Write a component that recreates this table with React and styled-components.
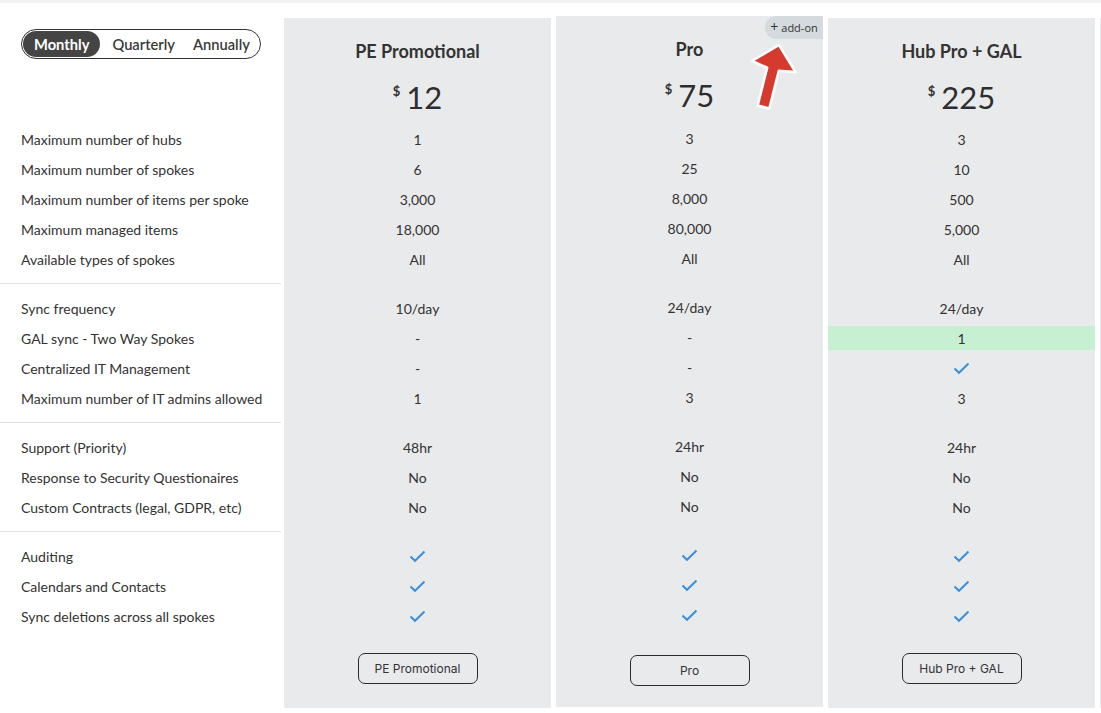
import React from 'react';
import styled, { createGlobalStyle, css } from 'styled-components';

const Global = createGlobalStyle`
  html, body { margin: 0; padding: 0; background: #fff; }
  body { font-family: Lato, "Noto Sans", sans-serif; color: #333; overflow: hidden; }
  #root { width: 1101px; height: 713px; overflow: hidden; }
`;

const TopBand = styled.div`
  height: 3px;
  background: #f3f3f3;
`;

const Table = styled.div`
  display: flex;
  align-items: flex-start;
  gap: 5px;
  margin-top: 15px;
`;

const LabelColumn = styled.div`
  flex: 0 0 279px;
  display: flex;
  flex-direction: column;
`;

const Card = styled.div`
  position: relative;
  flex: 0 0 267px;
  height: ${p => (p.$raised ? 691 : 690)}px;
  margin-top: ${p => (p.$raised ? -2 : 0)}px;
  background: #e9eaec;
  display: flex;
  flex-direction: column;
`;

const Header = styled.div`
  height: ${p => p.$h}px;
  flex: 0 0 auto;
  display: flex;
  flex-direction: column;
  align-items: center;
  padding-top: 22px;
  box-sizing: border-box;
`;

const LabelHeader = styled.div`
  height: 106px;
  padding: 11px 0 0 21px;
  box-sizing: border-box;
`;

const Toggle = styled.div`
  display: inline-flex;
  align-items: center;
  border: 1px solid #333;
  border-radius: 16px;
  padding: 1px;
  height: 30px;
  box-sizing: border-box;
`;

const ToggleOption = styled.span`
  height: 26px;
  display: flex;
  align-items: center;
  padding: 0 ${p => (p.$active ? 11 : 9)}px;
  border-radius: 13px;
  font-size: 14.7px;
  font-weight: ${p => (p.$active ? 700 : 600)};
  color: ${p => (p.$active ? '#fff' : '#3a3a3a')};
  background: ${p => (p.$active ? '#444' : 'transparent')};
  margin-right: ${p => (p.$active ? 3 : 0)}px;
`;

const Title = styled.div`
  font-size: 18px;
  line-height: 22px;
  font-weight: 700;
  color: #333;
`;

const Price = styled.div`
  margin-top: 17px;
  display: flex;
  align-items: flex-start;
  line-height: 36px;
`;

const Currency = styled.span`
  font-size: 13px;
  line-height: 13px;
  font-weight: 700;
  margin-top: 6px;
  margin-right: 6px;
`;

const Amount = styled.span`
  font-size: 31px;
  color: #2e2e2e;
`;

const Section = styled.div`
  padding: ${p => (p.$first ? 0 : 9)}px 0 9px;
`;

const Divider = styled.div`
  height: 1px;
  background: ${p => (p.$visible ? '#e2e2e2' : 'transparent')};
  margin-right: ${p => (p.$visible ? -2 : 0)}px;
`;

const LabelRow = styled.div`
  height: 30px;
  display: flex;
  align-items: center;
  padding-left: 21px;
  font-size: 14px;
  color: #333;
  white-space: nowrap;
`;

const Cell = styled.div`
  height: 30px;
  box-sizing: border-box;
  display: flex;
  align-items: center;
  justify-content: center;
  font-size: 14px;
  color: #333;
  ${p =>
    p.$highlight &&
    css`
      padding: 3px 0;
      background: #c7f0d3;
      background-clip: content-box;
    `}
`;

const Footer = styled.div`
  margin-top: ${p => (p.$raised ? 16 : 13)}px;
  display: flex;
  justify-content: center;
`;

const PlanButton = styled.button`
  width: 120px;
  height: 31px;
  border: 1px solid #2b2b2b;
  border-radius: 7px;
  background: transparent;
  font-family: Inter, "Noto Sans", sans-serif;
  font-size: 12px;
  color: #333;
  padding: 0;
  cursor: pointer;
`;

const Badge = styled.div`
  position: absolute;
  top: 0;
  right: 0;
  width: 58px;
  height: 23px;
  box-sizing: border-box;
  background: #d4dadd;
  border-radius: 12px 0 0 12px;
  display: flex;
  align-items: center;
  justify-content: center;
  gap: 3px;
  font-family: "Open Sans", "Noto Sans", sans-serif;
  font-size: 11px;
  color: #333;
`;

const Plus = styled.span`
  font-size: 14px;
  font-weight: 400;
  line-height: 1;
  margin-top: -1px;
`;

const ArrowSvg = styled.svg`
  position: absolute;
  left: 188px;
  top: 20px;
  width: 60px;
  height: 80px;
  overflow: visible;
  pointer-events: none;
`;

const Check = () => (
  <svg width="17" height="13" viewBox="0 0 17 13">
    <path d="M1.5 6.5 L6 10.8 L15.5 1.5" fill="none" stroke="#3b8fd8" strokeWidth="2" />
  </svg>
);

const C = 'check';

const sections = [
  [
    ['Maximum number of hubs', ['1', '3', '3']],
    ['Maximum number of spokes', ['6', '25', '10']],
    ['Maximum number of items per spoke', ['3,000', '8,000', '500']],
    ['Maximum managed items', ['18,000', '80,000', '5,000']],
    ['Available types of spokes', ['All', 'All', 'All']],
  ],
  [
    ['Sync frequency', ['10/day', '24/day', '24/day']],
    ['GAL sync - Two Way Spokes', ['-', '-', '1'], 2],
    ['Centralized IT Management', ['-', '-', C]],
    ['Maximum number of IT admins allowed', ['1', '3', '3']],
  ],
  [
    ['Support (Priority)', ['48hr', '24hr', '24hr']],
    ['Response to Security Questionaires', ['No', 'No', 'No']],
    ['Custom Contracts (legal, GDPR, etc)', ['No', 'No', 'No']],
  ],
  [
    ['Auditing', [C, C, C]],
    ['Calendars and Contacts', [C, C, C]],
    ['Sync deletions across all spokes', [C, C, C]],
  ],
];

const plans = [
  { name: 'PE Promotional', price: '12' },
  { name: 'Pro', price: '75', raised: true, addon: true },
  { name: 'Hub Pro + GAL', price: '225' },
];

const Arrow = () => (
  <ArrowSvg viewBox="188 20 60 80">
    <polygon
      points="223,29 239.5,56 222.8,54.7 213.3,92.5 201.7,89.5 211.2,51.7 196,45"
      fill="#d63a2f"
      stroke="#fff"
      strokeWidth="2.5"
      strokeLinejoin="round"
    />
  </ArrowSvg>
);

const PlanCard = ({ plan, index }) => (
  <Card $raised={plan.raised}>
    <Header $h={plan.raised ? 107 : 106}>
      <Title>{plan.name}</Title>
      <Price>
        <Currency>$</Currency>
        <Amount>{plan.price}</Amount>
      </Price>
    </Header>
    {sections.map((rows, si) => (
      <React.Fragment key={si}>
        {si > 0 && <Divider />}
        <Section $first={si === 0}>
          {rows.map(([label, vals, hl]) => (
            <Cell key={label} $highlight={hl === index}>
              {vals[index] === C ? <Check /> : vals[index]}
            </Cell>
          ))}
        </Section>
      </React.Fragment>
    ))}
    <Footer $raised={plan.raised}>
      <PlanButton>{plan.name}</PlanButton>
    </Footer>
    {plan.addon && (
      <>
        <Badge>
          <Plus>+</Plus>
          <span>add-on</span>
        </Badge>
        <Arrow />
      </>
    )}
  </Card>
);

export default function App() {
  return (
    <>
      <Global />
      <TopBand />
      <Table>
        <LabelColumn>
          <LabelHeader>
            <Toggle>
              <ToggleOption $active>Monthly</ToggleOption>
              <ToggleOption>Quarterly</ToggleOption>
              <ToggleOption>Annually</ToggleOption>
            </Toggle>
          </LabelHeader>
          {sections.map((rows, si) => (
            <React.Fragment key={si}>
              {si > 0 && <Divider $visible />}
              <Section $first={si === 0}>
                {rows.map(([label]) => (
                  <LabelRow key={label}>{label}</LabelRow>
                ))}
              </Section>
            </React.Fragment>
          ))}
        </LabelColumn>
        {plans.map((p, i) => (
          <PlanCard key={p.name} plan={p} index={i} />
        ))}
        <Card />
      </Table>
    </>
  );
}
